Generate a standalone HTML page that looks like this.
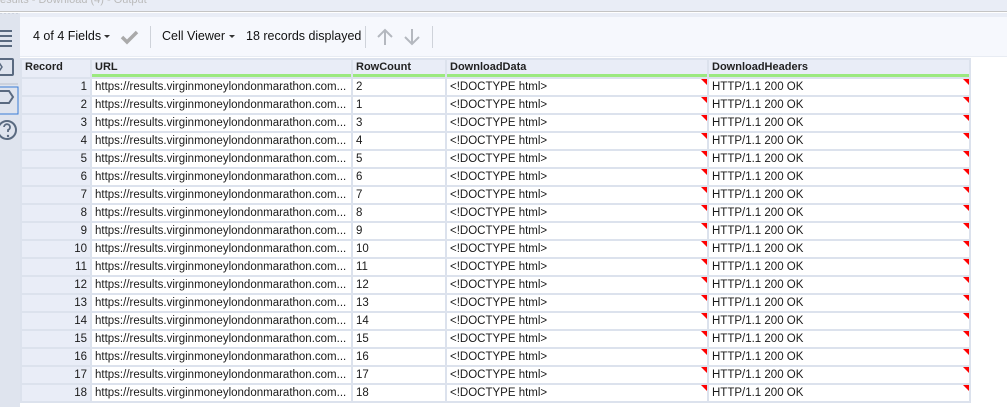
<!DOCTYPE html>
<html><head><style>
*{margin:0;padding:0;box-sizing:border-box}
body{width:1007px;height:407px;overflow:hidden;background:#fff;font-family:"Liberation Sans",sans-serif;font-size:12px;color:#1a1a1a;position:relative}
.a{position:absolute}
.top{left:0;top:0;width:1007px;height:12px;background:#e9edf6;border-bottom:1px solid #c4c4c4}
.top span{position:absolute;left:0;top:-6px;color:#bbb;font-size:11px}
.side{left:0;top:13px;width:20px;height:394px;background:#dfe4ee}
.band{left:20px;top:13px;width:987px;height:4px;background:#e9edf6}
.tb{left:20px;top:17px;width:987px;height:40px;background:#f6f8fd;border-bottom:1px solid #e8ecf3}
.tb .t{position:absolute;top:12px;font-size:12.5px;color:#111}
.sep{position:absolute;top:9px;width:1px;height:22px;background:#cfd3da}
table{position:absolute;left:20px;top:58px;border-collapse:separate;border-spacing:2px;background:#dce2ed;table-layout:fixed}
td,th{height:16px;padding:0 3px;white-space:nowrap;overflow:hidden;font-size:11.5px;font-weight:normal;text-align:left;line-height:16px;position:relative}
td{padding-top:1px;line-height:15px}
th{background:#e9edf7;font-weight:bold;font-size:11px;color:#222;border-bottom:3px solid #9be97f;line-height:14px;height:17px}
th.r{border-bottom:3px solid #e9edf7}
td{background:#fff}
td.r{background:#e9edf7;text-align:right}
td.f::after{content:"";position:absolute;right:0;top:0;border-top:6px solid #f00;border-left:6px solid transparent}
</style></head><body>
<div class="a top"><span>esults - Download (4) - Output</span></div>
<div class="a side">
<svg width="20" height="140" style="position:absolute;left:0;top:0">
<line x1="0" y1="0" x2="18" y2="0" stroke="#b8c0cc" stroke-dasharray="2 2"/>
<g fill="none" stroke="#5a6a80" stroke-width="2">
<path d="M0 18h12M0 23h12M0 28h12M0 33h12"/>
<rect x="-3" y="46" width="16" height="16" rx="1"/>
<path d="M-2 48l4 6-4 6" stroke-width="1.5"/>
<path d="M-3 78h12l4 6-4 6h-12"/>
<circle cx="7" cy="117" r="9"/>
<path d="M4 114a3 3 0 1 1 4 3v2" stroke-width="1.8"/>
</g>
<circle cx="8" cy="123" r="1.2" fill="#5a6a80"/>
<rect x="-1" y="74" width="19" height="27" fill="none" stroke="#3a7bd5" stroke-width="1"/>
<line x1="0" y1="71" x2="18" y2="71" stroke="#b8c0cc"/>
</svg>
</div>
<div class="a band"></div>
<div class="a tb">
<span class="t" style="left:13px">4 of 4 Fields</span>
<svg class="a" style="left:84px;top:18px" width="8" height="5"><path d="M0 0h6l-3 3z" fill="#333"/></svg>
<svg class="a" style="left:100px;top:12px" width="20" height="16"><path d="M2 8l5 5 10-10" fill="none" stroke="#aaa" stroke-width="3.5"/></svg>
<div class="sep" style="left:130px"></div>
<span class="t" style="left:142px">Cell Viewer</span>
<svg class="a" style="left:209px;top:18px" width="8" height="5"><path d="M0 0h6l-3 3z" fill="#333"/></svg>
<span class="t" style="left:226px">18 records displayed</span>
<div class="sep" style="left:345px"></div>
<svg class="a" style="left:355px;top:10px" width="20" height="20"><path d="M10 18V3M3 10l7-7 7 7" fill="none" stroke="#b4b8bf" stroke-width="2"/></svg>
<svg class="a" style="left:382px;top:10px" width="20" height="20"><path d="M10 2v15M3 10l7 7 7-7" fill="none" stroke="#b4b8bf" stroke-width="2"/></svg>
<div class="sep" style="left:412px"></div>
</div>
<table>
<colgroup><col style="width:68px"><col style="width:259px"><col style="width:92px"><col style="width:260px"><col style="width:260px"></colgroup>
<tr><th class="r">Record</th><th>URL</th><th>RowCount</th><th>DownloadData</th><th>DownloadHeaders</th></tr>
<tr><td class="r">1</td><td>https://results.virginmoneylondonmarathon.com...</td><td>2</td><td class="f">&lt;!DOCTYPE html&gt;</td><td class="f">HTTP/1.1 200 OK</td></tr>
<tr><td class="r">2</td><td>https://results.virginmoneylondonmarathon.com...</td><td>1</td><td class="f">&lt;!DOCTYPE html&gt;</td><td class="f">HTTP/1.1 200 OK</td></tr>
<tr><td class="r">3</td><td>https://results.virginmoneylondonmarathon.com...</td><td>3</td><td class="f">&lt;!DOCTYPE html&gt;</td><td class="f">HTTP/1.1 200 OK</td></tr>
<tr><td class="r">4</td><td>https://results.virginmoneylondonmarathon.com...</td><td>4</td><td class="f">&lt;!DOCTYPE html&gt;</td><td class="f">HTTP/1.1 200 OK</td></tr>
<tr><td class="r">5</td><td>https://results.virginmoneylondonmarathon.com...</td><td>5</td><td class="f">&lt;!DOCTYPE html&gt;</td><td class="f">HTTP/1.1 200 OK</td></tr>
<tr><td class="r">6</td><td>https://results.virginmoneylondonmarathon.com...</td><td>6</td><td class="f">&lt;!DOCTYPE html&gt;</td><td class="f">HTTP/1.1 200 OK</td></tr>
<tr><td class="r">7</td><td>https://results.virginmoneylondonmarathon.com...</td><td>7</td><td class="f">&lt;!DOCTYPE html&gt;</td><td class="f">HTTP/1.1 200 OK</td></tr>
<tr><td class="r">8</td><td>https://results.virginmoneylondonmarathon.com...</td><td>8</td><td class="f">&lt;!DOCTYPE html&gt;</td><td class="f">HTTP/1.1 200 OK</td></tr>
<tr><td class="r">9</td><td>https://results.virginmoneylondonmarathon.com...</td><td>9</td><td class="f">&lt;!DOCTYPE html&gt;</td><td class="f">HTTP/1.1 200 OK</td></tr>
<tr><td class="r">10</td><td>https://results.virginmoneylondonmarathon.com...</td><td>10</td><td class="f">&lt;!DOCTYPE html&gt;</td><td class="f">HTTP/1.1 200 OK</td></tr>
<tr><td class="r">11</td><td>https://results.virginmoneylondonmarathon.com...</td><td>11</td><td class="f">&lt;!DOCTYPE html&gt;</td><td class="f">HTTP/1.1 200 OK</td></tr>
<tr><td class="r">12</td><td>https://results.virginmoneylondonmarathon.com...</td><td>12</td><td class="f">&lt;!DOCTYPE html&gt;</td><td class="f">HTTP/1.1 200 OK</td></tr>
<tr><td class="r">13</td><td>https://results.virginmoneylondonmarathon.com...</td><td>13</td><td class="f">&lt;!DOCTYPE html&gt;</td><td class="f">HTTP/1.1 200 OK</td></tr>
<tr><td class="r">14</td><td>https://results.virginmoneylondonmarathon.com...</td><td>14</td><td class="f">&lt;!DOCTYPE html&gt;</td><td class="f">HTTP/1.1 200 OK</td></tr>
<tr><td class="r">15</td><td>https://results.virginmoneylondonmarathon.com...</td><td>15</td><td class="f">&lt;!DOCTYPE html&gt;</td><td class="f">HTTP/1.1 200 OK</td></tr>
<tr><td class="r">16</td><td>https://results.virginmoneylondonmarathon.com...</td><td>16</td><td class="f">&lt;!DOCTYPE html&gt;</td><td class="f">HTTP/1.1 200 OK</td></tr>
<tr><td class="r">17</td><td>https://results.virginmoneylondonmarathon.com...</td><td>17</td><td class="f">&lt;!DOCTYPE html&gt;</td><td class="f">HTTP/1.1 200 OK</td></tr>
<tr><td class="r">18</td><td>https://results.virginmoneylondonmarathon.com...</td><td>18</td><td class="f">&lt;!DOCTYPE html&gt;</td><td class="f">HTTP/1.1 200 OK</td></tr>
</table>
</body></html>
